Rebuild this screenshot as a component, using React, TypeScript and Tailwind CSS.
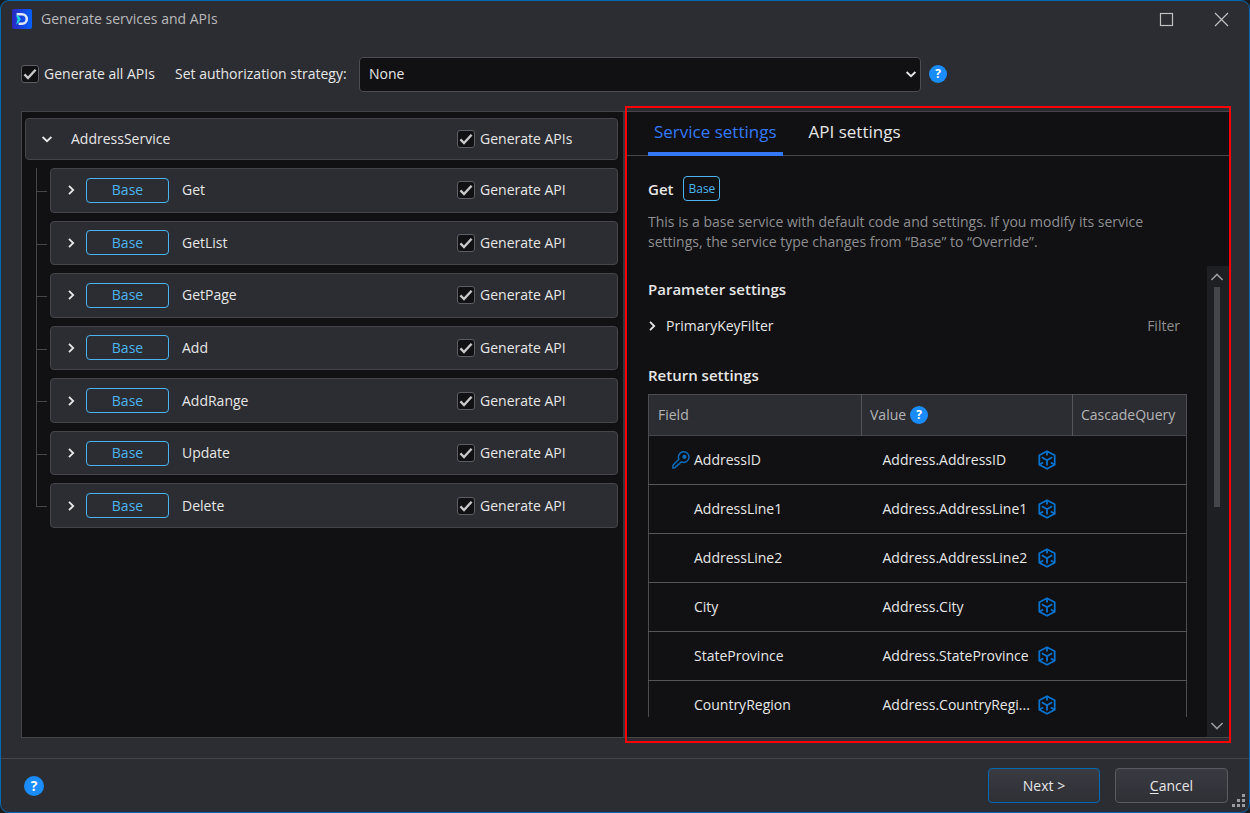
import { useState, type ReactNode } from "react";

type Service = { name: string; type: string };

type ReturnField = { name: string; value: string; isKey?: boolean };

const SERVICES: Service[] = [
  { name: "Get", type: "Base" },
  { name: "GetList", type: "Base" },
  { name: "GetPage", type: "Base" },
  { name: "Add", type: "Base" },
  { name: "AddRange", type: "Base" },
  { name: "Update", type: "Base" },
  { name: "Delete", type: "Base" },
];

const RETURN_FIELDS: ReturnField[] = [
  { name: "AddressID", value: "Address.AddressID", isKey: true },
  { name: "AddressLine1", value: "Address.AddressLine1" },
  { name: "AddressLine2", value: "Address.AddressLine2" },
  { name: "City", value: "Address.City" },
  { name: "StateProvince", value: "Address.StateProvince" },
  { name: "CountryRegion", value: "Address.CountryRegi..." },
];

const TABS = ["Service settings", "API settings"];

function AppLogo() {
  return (
    <svg className="h-5 w-5 shrink-0" viewBox="0 0 20 20" aria-hidden="true">
      <defs>
        <linearGradient id="logo-bg" x1="0" y1="0" x2="1" y2="0">
          <stop offset="0" stopColor="#2a27c0" />
          <stop offset="1" stopColor="#0560ff" />
        </linearGradient>
      </defs>
      <rect width="20" height="20" rx="2" fill="url(#logo-bg)" />
      <path d="M4.6 5.2H10a4.8 4.8 0 0 1 0 9.6H6.6" fill="none" stroke="#dfe8ff" strokeWidth="2.6" />
      <path d="M4 6.4 6.4 6.6 9 10.2 6.6 13.6 4 15.4 5.6 10.2Z" fill="#19d3e0" />
    </svg>
  );
}

function Chevron({ dir }: { dir: "right" | "down" }) {
  return (
    <svg className="h-3 w-3" viewBox="0 0 12 12" fill="none" stroke="#e8e8e8" strokeWidth="1.8" aria-hidden="true">
      <path d={dir === "right" ? "M4 1.8 8.2 6 4 10.2" : "M1.6 4 6 8.2 10.4 4"} />
    </svg>
  );
}

function KeyIcon() {
  return (
    <svg className="h-[18px] w-[18px]" viewBox="0 0 18 18" fill="none" stroke="#0a6cbd" strokeWidth="1.5" aria-label="Primary key">
      <path d="M6.9 8.3A5.3 5.3 0 1 1 9.7 11L8.2 11.4 7.7 13 6.1 13.3 5.5 14.8 4 15.1 3.3 16.6.9 17.1 1 14.3Z" strokeLinejoin="round" />
      <circle cx="12.4" cy="5.8" r="1.4" fill="#0a6cbd" />
    </svg>
  );
}

function CubeIcon() {
  return (
    <svg className="h-5 w-[18px]" viewBox="0 0 18 20" fill="none" stroke="#0873cf" strokeWidth="1.8" aria-hidden="true">
      <path d="M9 1.2 16.7 5.3V14.7L9 18.8 1.3 14.7V5.3Z" strokeLinejoin="round" />
      <path d="M9 1.2V5.4M3.8 7.2 9 10.2 14.2 7.2M9 10.2V15.6M1.3 14.7 5.2 12.5M16.7 14.7 12.8 12.5" />
    </svg>
  );
}

function HelpButton({ size = "sm" }: { size?: "sm" | "md" }) {
  return (
    <button
      type="button"
      aria-label="Help"
      className={`flex shrink-0 items-center justify-center rounded-full bg-[#1a8cff] font-bold text-white ${
        size === "md" ? "h-5 w-5 text-sm" : "h-[18px] w-[18px] text-xs"
      }`}
    >
      ?
    </button>
  );
}

function CheckBox({ children }: { children: ReactNode }) {
  return (
    <label className="flex items-center gap-[5px] whitespace-nowrap">
      <span className="grid h-[18px] w-[18px]">
        <input
          type="checkbox"
          defaultChecked
          className="peer col-start-1 row-start-1 h-[18px] w-[18px] appearance-none rounded-[3px] border border-[#5d5d64] bg-[#111113]"
        />
        <svg
          className="pointer-events-none invisible col-start-1 row-start-1 h-[18px] w-[18px] peer-checked:visible"
          viewBox="0 0 18 18"
          fill="none"
          stroke="#c8c8c8"
          strokeWidth="2.4"
          aria-hidden="true"
        >
          <path d="M3.4 9.4 7 13 14.6 4.8" />
        </svg>
      </span>
      {children}
    </label>
  );
}

function TitleBar() {
  return (
    <header className="flex h-9 shrink-0 items-center pl-[11px] pr-5">
      <AppLogo />
      <h1 className="ml-[9px] flex-1 text-[#b9b9bb]">Generate services and APIs</h1>
      <div className="flex items-center gap-10">
        <button type="button" aria-label="Maximize">
          <svg className="h-[15px] w-[15px]" viewBox="0 0 15 15" fill="none" stroke="#c0c0c0" strokeWidth="1.2">
            <rect x="1.5" y="1.5" width="12" height="12" />
          </svg>
        </button>
        <button type="button" aria-label="Close">
          <svg className="h-[15px] w-[15px]" viewBox="0 0 15 15" fill="none" stroke="#c0c0c0" strokeWidth="1.2">
            <path d="M1 1 14 14M14 1 1 14" />
          </svg>
        </button>
      </div>
    </header>
  );
}

function Toolbar() {
  return (
    <div className="flex h-[74px] shrink-0 items-center px-5">
      <div className="w-[154px] shrink-0">
        <CheckBox>Generate all APIs</CheckBox>
      </div>
      <label htmlFor="auth-strategy" className="w-[184px] shrink-0 whitespace-nowrap">
        Set authorization strategy:
      </label>
      <div className="relative w-[562px]">
        <select
          id="auth-strategy"
          className="block h-[35px] w-full appearance-none rounded border border-[#4c4c52] bg-[#111113] px-[9px]"
        >
          <option>None</option>
        </select>
        <span className="pointer-events-none absolute inset-y-0 right-1 flex items-center">
          <Chevron dir="down" />
        </span>
      </div>
      <div className="ml-2">
        <HelpButton />
      </div>
    </div>
  );
}

function ServiceTree() {
  return (
    <section className="w-[602px] shrink-0 border-y border-l border-[#45454a] bg-[#111113] pl-[3px] pr-[5px] pt-[6px]">
      <div className="flex h-[42px] items-center rounded border border-[#45454a] bg-[#2c2d32] pl-[15px]">
        <button type="button" aria-label="Collapse AddressService">
          <Chevron dir="down" />
        </button>
        <span className="ml-[18px] flex-1">AddressService</span>
        <div className="w-40">
          <CheckBox>Generate APIs</CheckBox>
        </div>
      </div>
      <ul className="mt-2 grid h-[368px] grid-rows-7 pl-[11px]">
        {SERVICES.map((service, i) => (
          <li key={service.name} className="flex">
            <div className="mr-[3px] flex w-[11px] flex-col">
              <div className="h-6 border-b border-l border-[#45454a]" />
              {i < SERVICES.length - 1 && <div className="flex-1 border-l border-[#45454a]" />}
            </div>
            <div className="flex-1 pb-2">
              <div className="flex h-full items-center rounded border border-[#45454a] bg-[#2c2d32] pl-[14px]">
                <button type="button" aria-label={`Expand ${service.name}`}>
                  <Chevron dir="right" />
                </button>
                <span className="ml-[9px] flex h-[25px] w-[83px] items-center justify-center rounded border border-[#4bb4ee] text-[#4bb4ee]">
                  {service.type}
                </span>
                <span className="ml-[13px] flex-1">{service.name}</span>
                <div className="w-40">
                  <CheckBox>Generate API</CheckBox>
                </div>
              </div>
            </div>
          </li>
        ))}
      </ul>
    </section>
  );
}

function ReturnTable() {
  return (
    <table className="w-full table-fixed border-collapse border border-[#4c4c52] text-left">
      <thead>
        <tr className="h-[41px] border-b border-[#45454a] bg-[#2c2d32] text-[#b4b4b6]">
          <th className="w-[213px] border-r border-[#55555b] px-[9px] font-normal">Field</th>
          <th className="w-[211px] border-r border-[#55555b] px-2 font-normal">
            <div className="flex items-center gap-1">
              Value
              <HelpButton />
            </div>
          </th>
          <th className="px-2 font-normal">CascadeQuery</th>
        </tr>
      </thead>
      <tbody>
        {RETURN_FIELDS.map((field) => (
          <tr key={field.name} className="h-[49px] border-b border-[#55555b]">
            <td>
              <div className="flex items-center gap-1 pl-[23px]">
                <span className="h-[18px] w-[18px]">{field.isKey && <KeyIcon />}</span>
                {field.name}
              </div>
            </td>
            <td>
              <div className="flex items-center pl-[21px]">
                <span className="w-[155px] shrink-0 whitespace-nowrap">{field.value}</span>
                <CubeIcon />
              </div>
            </td>
            <td />
          </tr>
        ))}
      </tbody>
    </table>
  );
}

function SettingsPanel() {
  const [activeTab, setActiveTab] = useState(TABS[0]);

  return (
    <section className="relative flex min-w-0 flex-1 flex-col border-y border-r border-[#45454a] bg-[#111113]">
      <span className="pointer-events-none absolute -inset-x-0.5 -inset-y-1.5 z-10 border-2 border-[#ff0008]" />
      <div role="tablist" className="flex h-11 shrink-0 gap-5 border-b border-[#45454a] pl-[21px]">
        {TABS.map((tab) => (
          <button
            key={tab}
            type="button"
            role="tab"
            aria-selected={tab === activeTab}
            onClick={() => setActiveTab(tab)}
            className={`h-11 border-b-4 px-1.5 text-[17px] ${
              tab === activeTab ? "border-[#3478f6] text-[#3478f6]" : "border-transparent"
            }`}
          >
            {tab}
          </button>
        ))}
      </div>
      <div className="shrink-0 pl-[21px] pr-10 pt-5">
        <div className="flex h-[25px] items-center gap-2.5">
          <h2 className="text-[15px] font-semibold leading-5">Get</h2>
          <span className="flex h-[25px] items-center rounded border border-[#4bb4ee] px-1 text-xs text-[#4bb4ee]">Base</span>
        </div>
        <p className="mt-[11px] max-w-[520px] text-[#8e8e90]">
          This is a base service with default code and settings. If you modify its service settings, the service type
          changes from “Base” to “Override”.
        </p>
      </div>
      <div className="mt-3.5 flex min-h-0 flex-1">
        <div className="mb-5 min-w-0 flex-1 overflow-hidden pl-[21px] pr-5 pt-[13px]">
          <h3 className="text-[15px] font-semibold leading-5">Parameter settings</h3>
          <div className="mt-[17px] flex items-center pr-[7px]">
            <button type="button" aria-label="Expand PrimaryKeyFilter" className="-ml-0.5">
              <Chevron dir="right" />
            </button>
            <span className="ml-2 flex-1">PrimaryKeyFilter</span>
            <span className="text-[#8e8e90]">Filter</span>
          </div>
          <h3 className="mb-[9px] mt-[29px] text-[15px] font-semibold leading-5">Return settings</h3>
          <ReturnTable />
        </div>
        <div className="flex w-[22px] shrink-0 flex-col items-center bg-[#1e1f23] py-1 pr-0.5">
          <svg className="h-3.5 w-3.5" viewBox="0 0 14 14" fill="none" stroke="#9a9a9c" strokeWidth="1.6" aria-hidden="true">
            <path d="M1.4 10 7 4.4 12.6 10" />
          </svg>
          <div className="mt-[3px] h-[220px] w-1.5 bg-[#45454c]" />
          <svg className="mt-auto h-3.5 w-3.5" viewBox="0 0 14 14" fill="none" stroke="#9a9a9c" strokeWidth="1.6" aria-hidden="true">
            <path d="M1.4 4 7 9.6 12.6 4" />
          </svg>
        </div>
      </div>
    </section>
  );
}

function Footer() {
  return (
    <footer className="relative flex h-[54px] shrink-0 items-center gap-[15px] border-t border-[#45454a] pl-[23px] pr-[21px]">
      <div className="flex-1">
        <HelpButton size="md" />
      </div>
      <button
        type="button"
        className="h-[35px] w-[112px] rounded border border-[#0568b4] bg-linear-to-b from-[#3a3b42] to-[#2f3036]"
      >
        Next &gt;
      </button>
      <button
        type="button"
        className="h-[35px] w-[113px] rounded border border-[#5a5a60] bg-linear-to-b from-[#3a3b42] to-[#2f3036]"
      >
        <span className="underline underline-offset-2">C</span>ancel
      </button>
      <svg className="absolute bottom-1 right-1 h-3.5 w-3.5" viewBox="0 0 14 14" fill="#9c9c9e" aria-hidden="true">
        <path d="M11 0h3v3h-3zM11 5h3v3h-3zM6 5h3v3H6zM11 10h3v3h-3zM6 10h3v3H6zM1 10h3v3H1z" />
      </svg>
    </footer>
  );
}

export default function App() {
  return (
    <div className="h-screen bg-[#1c1c1c] font-['Open_Sans',sans-serif] text-sm text-[#e6e6e6]">
      <div className="flex h-full flex-col overflow-hidden rounded-[9px] border border-[#0568b4] bg-[#2c2d32]">
        <TitleBar />
        <Toolbar />
        <main className="flex min-h-0 flex-1 pb-5 pl-5 pr-[19px]">
          <ServiceTree />
          <div className="w-1 shrink-0 border-y border-[#45454a] bg-[#36363b]" />
          <SettingsPanel />
        </main>
        <Footer />
      </div>
    </div>
  );
}
